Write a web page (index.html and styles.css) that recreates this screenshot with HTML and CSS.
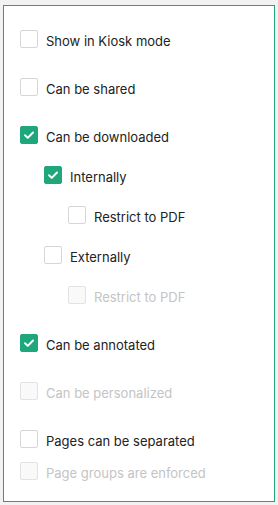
FILE: index.html
```html
<!DOCTYPE html>
<html>
<head>
    <title>Document options</title>
    <link rel="stylesheet" href="styles.css">
</head>
<body>
    <div class="panel">
        <label class="option">
            <span class="box"></span>
            <span class="label">Show in Kiosk mode</span>
        </label>
        <label class="option">
            <span class="box"></span>
            <span class="label">Can be shared</span>
        </label>

        <!-- Download options -->
        <div class="group">
            <label class="option">
                <span class="box checked"><svg viewBox="0 0 18 18"><path d="M4.5 9.2 L7.6 12.2 L13.5 6.2"/></svg></span>
                <span class="label">Can be downloaded</span>
            </label>
            <div class="sub">
                <label class="option">
                    <span class="box checked"><svg viewBox="0 0 18 18"><path d="M4.5 9.2 L7.6 12.2 L13.5 6.2"/></svg></span>
                    <span class="label">Internally</span>
                </label>
                <div class="sub">
                    <label class="option">
                        <span class="box"></span>
                        <span class="label">Restrict to PDF</span>
                    </label>
                </div>
                <label class="option">
                    <span class="box"></span>
                    <span class="label">Externally</span>
                </label>
                <div class="sub">
                    <label class="option disabled">
                        <span class="box"></span>
                        <span class="label">Restrict to PDF</span>
                    </label>
                </div>
            </div>
        </div>

        <label class="option">
            <span class="box checked"><svg viewBox="0 0 18 18"><path d="M4.5 9.2 L7.6 12.2 L13.5 6.2"/></svg></span>
            <span class="label">Can be annotated</span>
        </label>
        <label class="option disabled">
            <span class="box"></span>
            <span class="label">Can be personalized</span>
        </label>

        <div class="pair">
            <label class="option">
                <span class="box"></span>
                <span class="label">Pages can be separated</span>
            </label>
            <label class="option disabled">
                <span class="box"></span>
                <span class="label">Page groups are enforced</span>
            </label>
        </div>
    </div>
</body>
</html>
```

FILE: styles.css
```css
body {
    margin: 0;
    padding: 5px 3px 2px 3px;
    background-color: #f2f2f2;
    font-family: Inter, "Noto Sans", sans-serif;
    font-size: 13px;
    color: #222;
}

.panel {
    background-color: #fff;
    border: 1px solid #1fa77b;
    padding: 24px 16px 21px 16px;
    display: flex;
    flex-direction: column;
    gap: 30px;
}

.group,
.sub,
.pair {
    display: flex;
    flex-direction: column;
}

.group {
    gap: 22px;
}

.sub {
    gap: 22px;
    padding-left: 24px;
}

.pair {
    gap: 14px;
}

.option {
    display: flex;
    align-items: center;
    gap: 8px;
    height: 18px;
}

.box {
    width: 16px;
    height: 16px;
    border: 1px solid #d6d6d6;
    border-radius: 2px;
    background-color: #fff;
    flex-shrink: 0;
}

.box.checked {
    background-color: #1fa77b;
    border-color: #1fa77b;
}

.box svg {
    display: block;
    width: 16px;
    height: 16px;
}

.box svg path {
    fill: none;
    stroke: #fff;
    stroke-width: 2.2;
    stroke-linecap: round;
    stroke-linejoin: round;
}

.label {
    line-height: 18px;
    padding-top: 4px;
}

.disabled .box {
    background-color: #f9f9f9;
    border-color: #e2e2e2;
}

.disabled .label {
    color: #c4c4c4;
}
```
